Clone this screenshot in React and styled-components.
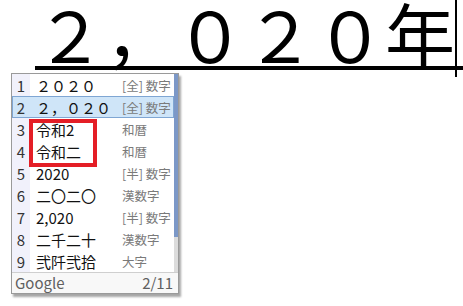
import React from 'react';
import styled, { createGlobalStyle } from 'styled-components';

const GlobalStyle = createGlobalStyle`
  html, body {
    margin: 0;
    padding: 0;
    background: #fff;
    overflow: hidden;
  }
  body {
    font-family: "Noto Sans CJK JP", "Noto Sans", sans-serif;
  }
`;

const Page = styled.div`
  position: relative;
  width: 463px;
  height: 306px;
`;

const Composition = styled.div`
  display: flex;
  padding-left: 35px;
  height: 70px;
`;

const Preedit = styled.span`
  flex: 1;
  font-size: 70px;
  line-height: 66px;
  height: 66px;
  color: #000;
  border-bottom: 4px solid #000;
  white-space: nowrap;
`;

const Caret = styled.div`
  position: absolute;
  left: 455px;
  top: 0;
  width: 2px;
  height: 77px;
  background: #000;
`;

const Window = styled.div`
  position: relative;
  margin: 3px 0 0 11px;
  width: 166px;
  border: 1px solid #9a9a9a;
  background: #fff;
  box-shadow: 2px 3px 2px rgba(0, 0, 0, 0.35);
`;

const Body = styled.div`
  display: flex;
`;

const List = styled.div`
  flex: 1;
  display: flex;
  flex-direction: column;
`;

const Row = styled.div`
  display: grid;
  grid-template-columns: 18px 92px 1fr;
  align-items: center;
  height: 22px;
  box-sizing: border-box;
  background: ${(p) => (p.$active ? '#cfe5f8' : 'transparent')};
  outline: ${(p) => (p.$active ? '1px solid #7fa6d3' : 'none')};
  outline-offset: -1px;
`;

const Num = styled.span`
  height: 100%;
  display: flex;
  align-items: center;
  justify-content: center;
  background: ${(p) => (p.$active ? 'transparent' : '#f1f1fb')};
  font-size: 15px;
  color: #333;
`;

const Cand = styled.span`
  padding-left: 6px;
  font-size: 15px;
  color: #111;
  white-space: nowrap;
  overflow: hidden;
`;

const Desc = styled.span`
  font-size: 12.5px;
  color: #7a7a7a;
  white-space: nowrap;
  overflow: hidden;
`;

const Scroll = styled.div`
  width: 4px;
  background: #dcdcdc;
  display: flex;
  flex-direction: column;
`;

const Thumb = styled.div`
  height: 163px;
  background: #7c98c7;
`;

const Footer = styled.div`
  display: flex;
  justify-content: space-between;
  align-items: center;
  height: 20px;
  padding: 0 5px 0 3px;
  border-top: 1px solid #cfcfcf;
  background: #f8f8f8;
  font-size: 15px;
  line-height: 20px;
  color: #606060;
`;

const Mark = styled.div`
  position: absolute;
  left: 17px;
  top: 45px;
  width: 68px;
  height: 48px;
  box-sizing: border-box;
  border: 4px solid #e41e26;
`;

const candidates = [
  { text: '２０２０', desc: '[全] 数字' },
  { text: '２，０２０', desc: '[全] 数字' },
  { text: '令和2', desc: '和暦' },
  { text: '令和二', desc: '和暦' },
  { text: '2020', desc: '[半] 数字' },
  { text: '二〇二〇', desc: '漢数字' },
  { text: '2,020', desc: '[半] 数字' },
  { text: '二千二十', desc: '漢数字' },
  { text: '弐阡弐拾', desc: '大字' },
];

export default function App() {
  return (
    <Page>
      <GlobalStyle />
      <Composition>
        <Preedit>２，０２０年</Preedit>
      </Composition>
      <Caret />
      <Window>
        <Body>
          <List>
            {candidates.map((c, i) => (
              <Row key={i} $active={i === 1}>
                <Num $active={i === 1}>{i + 1}</Num>
                <Cand>{c.text}</Cand>
                <Desc>{c.desc}</Desc>
              </Row>
            ))}
          </List>
          <Scroll>
            <Thumb />
          </Scroll>
        </Body>
        <Footer>
          <span>Google</span>
          <span>2/11</span>
        </Footer>
        <Mark />
      </Window>
    </Page>
  );
}
